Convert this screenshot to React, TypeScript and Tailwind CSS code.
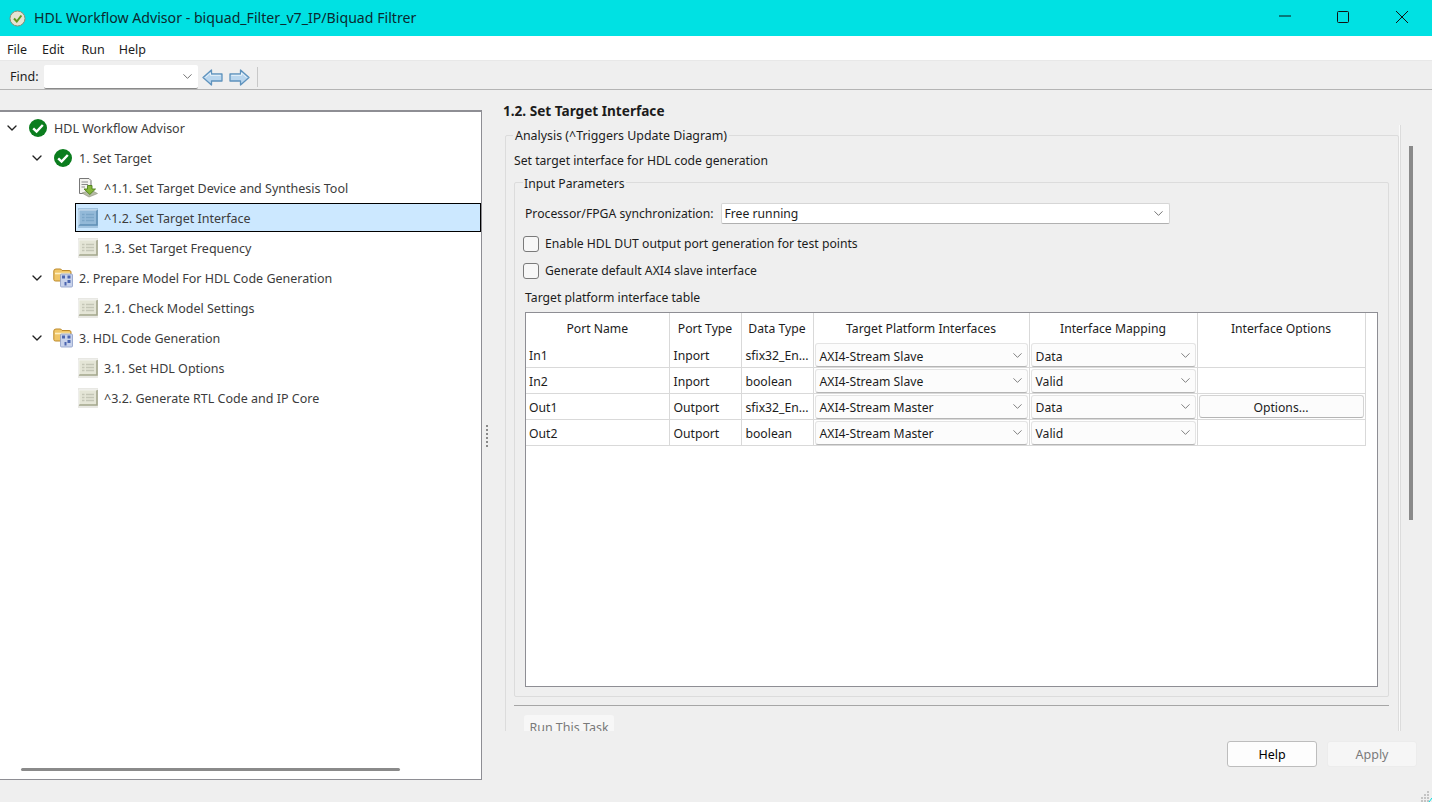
import { ChevronDown } from "lucide-react";

const font = "font-['Noto_Sans','Open_Sans',sans-serif]";

const treeRows = [
    { label: "HDL Workflow Advisor", indent: 0, chevron: true, icon: "check" },
    { label: "1. Set Target", indent: 25, chevron: true, icon: "check" },
    { label: "^1.1. Set Target Device and Synthesis Tool", indent: 50, icon: "download" },
    { label: "^1.2. Set Target Interface", indent: 50, icon: "task", selected: true },
    { label: "1.3. Set Target Frequency", indent: 50, icon: "task" },
    { label: "2. Prepare Model For HDL Code Generation", indent: 25, chevron: true, icon: "folder" },
    { label: "2.1. Check Model Settings", indent: 50, icon: "task" },
    { label: "3. HDL Code Generation", indent: 25, chevron: true, icon: "folder" },
    { label: "3.1. Set HDL Options", indent: 50, icon: "task" },
    { label: "^3.2. Generate RTL Code and IP Core", indent: 50, icon: "task" },
];

const tableRows = [
    { port: "In1", type: "Inport", data: "sfix32_En...", target: "AXI4-Stream Slave", map: "Data" },
    { port: "In2", type: "Inport", data: "boolean", target: "AXI4-Stream Slave", map: "Valid" },
    { port: "Out1", type: "Outport", data: "sfix32_En...", target: "AXI4-Stream Master", map: "Data", options: true },
    { port: "Out2", type: "Outport", data: "boolean", target: "AXI4-Stream Master", map: "Valid" },
];

function CheckIcon() {
    return (
        <svg width="20" height="20" viewBox="0 0 20 20">
            <circle cx="10" cy="10" r="9" fill="#0b7d1e" />
            <path d="M5.2 10.3 L8.6 13.6 L14.8 7" fill="none" stroke="#fff" strokeWidth="2.4" />
        </svg>
    );
}

function TaskIcon({ selected }: { selected?: boolean }) {
    const frame = selected ? "#7fa6c6" : "#d6d6cc";
    const face = selected ? "#93b9d8" : "#e4e5d6";
    const edge = selected ? "#5f8fb5" : "#a3a68c";
    const line = selected ? "#7ba6c8" : "#c4c6b6";
    return (
        <svg width="20" height="20" viewBox="0 0 20 20">
            <rect x="0" y="0" width="20" height="20" fill={frame} opacity="0.55" />
            <rect x="1" y="2" width="18" height="15" fill={face} />
            <path d="M19 2 V17 H1" fill="none" stroke={edge} strokeWidth="1.6" />
            <path d="M1 2 H19 M1 2 V17" fill="none" stroke="#fff" strokeWidth="0.8" opacity="0.7" />
            <path d="M4 6.5 H6.5 M8 6.5 H16 M4 9.5 H6.5 M8 9.5 H16 M4 12.5 H6.5 M8 12.5 H16" stroke={line} strokeWidth="1.4" />
        </svg>
    );
}

function DownloadIcon() {
    return (
        <svg width="20" height="20" viewBox="0 0 20 20">
            <path d="M1.5 0.5 H11 L13 2.5 V15.5 H1.5 Z" fill="#f4f4f0" stroke="#777" />
            <path d="M3.5 4 H10 M3.5 6.5 H10 M3.5 9 H7" stroke="#8a8a8a" />
            <path d="M4 15 L13 12 L19.5 15.5 L11 19 Z" fill="#b6bba6" stroke="#8b907a" strokeWidth="0.6" />
            <path d="M9.5 7.5 H14 V11 H17.5 L11.8 16.5 L6 11 H9.5 Z" fill="#86b83a" stroke="#4f7f1e" strokeWidth="0.9" />
        </svg>
    );
}

function FolderIcon() {
    return (
        <svg width="20" height="20" viewBox="0 0 20 20">
            <path d="M0.8 3 Q0.8 1 3 1 H7 Q8.5 1 9 2.5 H16 Q18 2.5 18 4 V13 H2.5 Q0.8 13 0.8 11.5 Z" fill="#f0c668" stroke="#bd8a2c" />
            <path d="M2 5.5 H17" stroke="#fff0c2" strokeWidth="1.6" />
            <rect x="7.5" y="6" width="12" height="13" rx="1" fill="#c8d2ea" stroke="#8c9cc8" strokeWidth="0.8" />
            <rect x="9" y="7.5" width="3" height="3" fill="#4c66b0" />
            <rect x="14.5" y="7.5" width="3" height="3" fill="#4c66b0" />
            <rect x="14.5" y="12" width="3" height="3" fill="#4c66b0" />
            <rect x="11.5" y="14" width="2" height="3.5" fill="#4c66b0" />
        </svg>
    );
}

function TreeIcon({ name, selected }: { name: string; selected?: boolean }) {
    if (name === "check") return <CheckIcon />;
    if (name === "download") return <DownloadIcon />;
    if (name === "folder") return <FolderIcon />;
    return <TaskIcon selected={selected} />;
}

function NavArrow({ flip }: { flip?: boolean }) {
    return (
        <svg width="21" height="17" viewBox="0 0 21 17" className={flip ? "-scale-x-100" : ""}>
            <path d="M1 8.5 L9.5 1 V5 H20 V12 H9.5 V16 Z" fill="#b9d6ee" stroke="#5f93bd" strokeWidth="1.3" strokeLinejoin="round" />
            <path d="M3.5 8.5 L8.5 4 V6.3 H18.7" fill="none" stroke="#e8f3fb" />
        </svg>
    );
}

function Chevron({ className }: { className?: string }) {
    return <ChevronDown size={15} strokeWidth={1.2} className={className ?? "text-[#444]"} />;
}

function TableSelect({ value }: { value: string }) {
    return (
        <div className="mx-[1px] flex h-[24px] items-center justify-between rounded-[3px] border border-[#e4e4e4] border-b-[#b5b5b5] bg-[#fcfcfc] pr-[2px] pl-[4px]">
            <span className="pt-[3px]">{value}</span>
            <Chevron className="text-[#555]" />
        </div>
    );
}

function Checkbox({ label }: { label: string }) {
    return (
        <div className="flex h-[27px] items-center pl-[8px]">
            <span className="h-[16px] w-[16px] rounded-[3px] border border-[#7a7a7a] bg-[#f7f7f7]" />
            <span className="ml-[6px]">{label}</span>
        </div>
    );
}

export default function App() {
    return (
        <div className={`${font} relative flex h-[802px] w-[1432px] flex-col overflow-hidden bg-[#efefef] text-[12.5px] text-[#1c1c1c]`}>
            <div className="flex h-[36px] shrink-0 items-center bg-[#00e1e3] pl-[9px] text-[14.15px] text-[#0b2a30]">
                <svg width="17" height="17" viewBox="0 0 17 17">
                    <circle cx="8.5" cy="8.5" r="7.5" fill="#e5e3d2" stroke="#8a8a72" />
                    <path d="M5 8.5 L7.8 11.5 L12.4 5.5" fill="none" stroke="#5b9a1f" strokeWidth="2" />
                </svg>
                <span className="ml-[8px]">HDL Workflow Advisor - biquad_Filter_v7_IP/Biquad Filtrer</span>
                <div className="ml-auto flex items-center">
                    <svg width="57" height="36" viewBox="0 0 57 36"><path d="M11 16 H23" stroke="#111" /></svg>
                    <svg width="55" height="36" viewBox="0 0 55 36"><rect x="12.5" y="11.5" width="11" height="11" rx="1" fill="none" stroke="#111" /></svg>
                    <svg width="52" height="36" viewBox="0 0 52 36"><path d="M16 11 L28 23 M28 11 L16 23" stroke="#111" /></svg>
                </div>
            </div>

            <div className="flex h-[25px] shrink-0 items-center gap-[15px] border-b border-[#e8e8e8] bg-white pt-[4px] pl-[7px]">
                <span>File</span>
                <span>Edit</span>
                <span className="ml-[2px]">Run</span>
                <span className="-ml-[1px]">Help</span>
            </div>

            <div className="flex h-[29px] shrink-0 items-center border-b border-[#b4b4b4] pt-[4px] pl-[10px]">
                <span>Find:</span>
                <div className="ml-[6px] flex h-[24px] w-[154px] items-center justify-end rounded-[2px] border-b border-[#8a8a8a] bg-white pr-[3px]">
                    <Chevron />
                </div>
                <div className="ml-[4px] flex items-center gap-[6px]">
                    <NavArrow />
                    <NavArrow flip />
                </div>
                <div className="ml-[7px] h-[20px] w-px bg-[#c8c8c8]" />
            </div>

            <div className="flex min-h-0 flex-1">
                <div className="flex h-[690px] w-[482px] shrink-0 flex-col pt-[20px]">
                    <div className="flex flex-1 flex-col border-t-2 border-r border-b border-[#8e8e94] bg-white pt-[1px] text-[#3c3c3c]">
                        {treeRows.map((row) => (
                            <div key={row.label} className="flex h-[30px] shrink-0 items-start" style={{ paddingLeft: row.indent + 4 }}>
                                <span className="flex h-[30px] w-[24px] shrink-0 items-center justify-start">
                                    {row.chevron && <ChevronDown size={16} strokeWidth={2} className="text-[#222]" />}
                                </span>
                                <div className={`flex flex-1 items-center ${row.selected ? "-ml-[3px] h-[29px] border border-black bg-[#cce8ff] pl-[2px]" : "h-[30px]"}`}>
                                    <TreeIcon name={row.icon} selected={row.selected} />
                                    <span className={`ml-[6px] ${row.selected ? "pt-[3px]" : "pt-[2px]"}`}>{row.label}</span>
                                </div>
                            </div>
                        ))}
                        <div className="mt-auto mb-[8px] ml-[21px] h-[3px] w-[379px] rounded-full bg-[#8a8a8a]" />
                    </div>
                </div>

                <div className="flex w-[11px] shrink-0 flex-col items-start pt-[335px] pl-[4px]">
                    <div className="flex flex-col gap-[2px]">
                        {[0, 1, 2, 3, 4, 5].map((i) => (
                            <span key={i} className="h-[2px] w-[2px] bg-[#8a8a8a]" />
                        ))}
                    </div>
                </div>

                <div className="flex min-w-0 flex-1 flex-col">
                    <div className="flex h-[641px] shrink-0 overflow-hidden text-[12.2px]">
                        <div className="w-[906px] shrink-0 overflow-hidden">
                            <h1 className="mt-[11px] ml-[10px] h-[19px] text-[13.6px] font-bold leading-[19px]">1.2. Set Target Interface</h1>
                            <fieldset className="mt-[5px] ml-[12px] h-[700px] w-[894px] rounded-[2px] border border-[#dcdcdc]">
                                <legend className="ml-[7px] px-[2px] pt-[2px] text-[12.4px]">Analysis (^Triggers Update Diagram)</legend>
                                <p className="mt-[6px] ml-[8px] h-[18px] leading-[18px]">Set target interface for HDL code generation</p>
                                <fieldset className="mt-[3px] ml-[8px] h-[524px] w-[875px] rounded-[2px] border border-[#dcdcdc]">
                                    <legend className="ml-[8px] px-[1px] pt-[2px]">Input Parameters</legend>
                                    <div className="mt-[9px] flex h-[24px] items-center pl-[10px]">
                                        <span>Processor/FPGA synchronization:</span>
                                        <div className="ml-[7px] flex h-[21px] w-[449px] items-center justify-between rounded-[2px] border border-[#d6d6d6] border-b-[#b0b0b0] bg-white pr-[3px] pl-[3px]">
                                            <span>Free running</span>
                                            <Chevron />
                                        </div>
                                    </div>
                                    <div className="mt-[5px]" />
                                    <Checkbox label="Enable HDL DUT output port generation for test points" />
                                    <Checkbox label="Generate default AXI4 slave interface" />
                                    <p className="mt-[4px] ml-[10px] h-[18px] leading-[18px]">Target platform interface table</p>
                                    <div className="mt-[5px] ml-[10px] h-[375px] w-[853px] border border-[#8e8e94] bg-white">
                                        <table className="table-fixed border-collapse">
                                            <colgroup>
                                                <col className="w-[143px]" />
                                                <col className="w-[72px]" />
                                                <col className="w-[72px]" />
                                                <col className="w-[216px]" />
                                                <col className="w-[168px]" />
                                                <col className="w-[168px]" />
                                            </colgroup>
                                            <thead>
                                                <tr className="h-[30px]">
                                                    {["Port Name", "Port Type", "Data Type", "Target Platform Interfaces", "Interface Mapping", "Interface Options"].map((h) => (
                                                        <th key={h} className="border-r border-[#d9d9d9] p-0 pt-[3px] text-center font-normal whitespace-nowrap">{h}</th>
                                                    ))}
                                                </tr>
                                            </thead>
                                            <tbody>
                                                {tableRows.map((row, i) => (
                                                    <tr key={row.port} className={`border-b border-[#d9d9d9] ${i === 0 ? "h-[25px]" : "h-[26px]"}`}>
                                                        <td className={`border-r border-[#d9d9d9] p-0 pl-[3px] ${i === 0 ? "pt-[1px]" : "pt-[3px]"}`}>{row.port}</td>
                                                        <td className={`border-r border-[#d9d9d9] p-0 pl-[4px] ${i === 0 ? "pt-[1px]" : "pt-[3px]"}`}>{row.type}</td>
                                                        <td className={`border-r border-[#d9d9d9] p-0 pl-[4px] whitespace-nowrap ${i === 0 ? "pt-[1px]" : "pt-[3px]"}`}>{row.data}</td>
                                                        <td className="border-r border-[#d9d9d9] p-0"><TableSelect value={row.target} /></td>
                                                        <td className="border-r border-[#d9d9d9] p-0"><TableSelect value={row.map} /></td>
                                                        <td className="border-r border-[#d9d9d9] p-0">
                                                            {row.options && (
                                                                <div className="mx-[1px] flex h-[23px] items-center justify-center rounded-[3px] border border-[#d4d4d4] border-b-[#b5b5b5] bg-[#fcfcfc] pt-[2px]">Options...</div>
                                                            )}
                                                        </td>
                                                    </tr>
                                                ))}
                                            </tbody>
                                        </table>
                                    </div>
                                </fieldset>
                                <div className="mt-[8px] ml-[8px] h-[1px] w-[875px] bg-[#a6a6a6]" />
                                <div className="mt-[9px] ml-[18px] flex h-[26px] w-[90px] items-center justify-center rounded-[3px] bg-[#f7f7f7] pt-[2px] text-[12.5px] text-[#7a7a7a]">Run This Task</div>
                            </fieldset>
                        </div>
                        <div className="mt-[35px] h-full w-[2px] shrink-0 border-r border-[#dcdcdc] bg-[#fafafa]" />
                        <div className="mt-[56px] ml-[8px] h-[374px] w-[4px] shrink-0 bg-[#8a8a8a]" />
                    </div>
                    <div className="mt-[10px] flex justify-end gap-[10px] pr-[15px]">
                        <div className="flex h-[26px] w-[90px] items-center justify-center rounded-[3px] border border-[#bdbdbd] bg-[#fdfdfd] pt-[2px] text-black">Help</div>
                        <div className="flex h-[26px] w-[90px] items-center justify-center rounded-[3px] border border-[#ececec] bg-[#f6f6f6] pt-[2px] text-[#7a7a7a]">Apply</div>
                    </div>
                </div>
            </div>

            <svg width="12" height="12" viewBox="0 0 12 12" className="absolute right-0 bottom-0">
                <g fill="#c4c4c4">
                    <rect x="7" y="1" width="2" height="2" />
                    <rect x="4" y="4" width="2" height="2" />
                    <rect x="7" y="4" width="2" height="2" />
                    <rect x="1" y="7" width="2" height="2" />
                    <rect x="4" y="7" width="2" height="2" />
                    <rect x="7" y="7" width="2" height="2" />
                    <rect x="1" y="10" width="2" height="2" />
                    <rect x="4" y="10" width="2" height="2" />
                    <rect x="7" y="10" width="2" height="2" />
                </g>
                <path d="M9 12 L12 8" stroke="#00e1e3" />
            </svg>
        </div>
    );
}
